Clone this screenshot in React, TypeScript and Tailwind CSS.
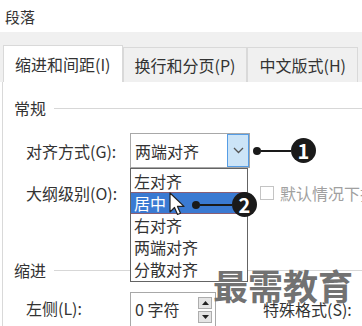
const font = { fontFamily: '"Noto Sans CJK SC", "Noto Sans", sans-serif' };

function Tab({ label, active }: { label: string; active?: boolean }) {
  return (
    <div
      className={`flex items-center whitespace-nowrap border-x border-t border-[#d9d9d9] px-[11px] text-[16px] text-[#333] ${
        active ? "h-[37px] bg-white" : "h-[35px] bg-[#f0f0f0]"
      }`}
    >
      {label}
    </div>
  );
}

function Section({ title }: { title: string }) {
  return (
    <div className="flex h-[20px] items-center gap-[8px] pl-[11px]">
      <span className="text-[16px] text-[#333]">{title}</span>
      <div className="h-px flex-1 bg-[#d7d7d7]" />
    </div>
  );
}

const options = ["左对齐", "居中", "右对齐", "两端对齐", "分散对齐"];

export default function App() {
  return (
    <div
      className="relative h-[326px] w-[362px] overflow-hidden bg-white leading-none"
      style={font}
    >
      {/* title */}
      <div className="flex h-[32px] items-center pl-[5px] text-[15px] text-[#333]">
        段落
      </div>

      {/* tab strip */}
      <div className="flex h-[50px] items-end bg-[#f0f0f0] pl-[3px]">
        <Tab label="缩进和间距(I)" active />
        <Tab label="换行和分页(P)" />
        <Tab label="中文版式(H)" />
      </div>

      {/* tab page */}
      <div className="ml-[2px] h-[244px] border-l border-[#d9d9d9] bg-white pt-[16px]">
        <Section title="常规" />

        <div className="mt-[15px] flex h-[35px] items-center">
          <span className="w-[127px] shrink-0 whitespace-nowrap pl-[23px] text-[16px] text-[#333]">
            对齐方式(G):
          </span>
          <div className="flex h-[35px] w-[120px] shrink-0 items-stretch border border-[#a8a8a8]">
            <span className="flex flex-1 items-center whitespace-nowrap pl-[4px] text-[16px] text-[#333]">
              两端对齐
            </span>
            <div className="flex w-[22px] items-center justify-center border border-[#569de5] bg-[#cce4f7]">
              <svg width="11" height="7" viewBox="0 0 11 7">
                <path d="M1 1l4.5 4.5L10 1" fill="none" stroke="#555" strokeWidth="1.3" />
              </svg>
            </div>
          </div>
        </div>

        <div className="mt-[15px] flex h-[20px] items-center">
          <span className="w-[257px] shrink-0 whitespace-nowrap pl-[23px] text-[16px] text-[#333]">
            大纲级别(O):
          </span>
          <div className="h-[14px] w-[14px] shrink-0 border border-[#c4c4c4]" />
          <span className="ml-[6px] shrink-0 whitespace-nowrap text-[16px] text-[#a0a0a0]">
            默认情况下折叠
          </span>
        </div>

        <div className="mt-[57px]">
          <Section title="缩进" />
        </div>

        <div className="mt-[12px] flex items-start">
          <span className="mt-[8px] w-[127px] shrink-0 whitespace-nowrap pl-[23px] text-[16px] text-[#333]">
            左侧(L):
          </span>
          <div className="flex h-[40px] w-[86px] shrink-0 border border-[#a8a8a8] pt-[4px]">
            <span className="mt-[4px] flex-1 whitespace-nowrap pl-[4px] text-[16px] text-[#333]">
              0 字符
            </span>
            <div className="mr-[3px] flex flex-col gap-[2px]">
              <div className="flex h-[12px] w-[14px] items-center justify-center border border-[#adadad] bg-[#e5e5e5]">
                <svg width="7" height="4" viewBox="0 0 7 4"><path d="M0 4L3.5 0L7 4z" fill="#222" /></svg>
              </div>
              <div className="flex h-[12px] w-[14px] items-center justify-center border border-[#adadad] bg-[#e5e5e5]">
                <svg width="7" height="4" viewBox="0 0 7 4"><path d="M0 0L3.5 4L7 0z" fill="#222" /></svg>
              </div>
            </div>
          </div>
          <span className="ml-[47px] mt-[9px] shrink-0 whitespace-nowrap text-[16px] text-[#333]">
            特殊格式(S):
          </span>
        </div>
      </div>

      {/* open dropdown list */}
      <div className="absolute left-[130px] top-[168px] flex h-[114px] w-[118px] flex-col border border-[#646464] bg-white pt-[1px]">
        {options.map((o) => (
          <div
            key={o}
            className={`flex h-[22px] items-center whitespace-nowrap pl-[3px] text-[16px] ${
              o === "居中"
                ? "border-y border-[#8a5f73] bg-[#3a7ad2] text-white"
                : "text-[#333]"
            }`}
          >
            {o}
          </div>
        ))}
      </div>

      {/* mouse cursor */}
      <svg className="absolute left-[169px] top-[192px]" width="16" height="25" viewBox="0 0 16 25">
        <path
          d="M1 1v19l4.5-4.5 3 7 3-1.3-3-6.8H15z"
          fill="#fff"
          stroke="#222"
          strokeWidth="1.2"
          strokeLinejoin="round"
        />
      </svg>

      {/* callout 1 */}
      <div className="absolute left-[253px] top-[138px] flex items-center">
        <div className="h-[8px] w-[8px] rounded-full bg-[#1a1a1a]" />
        <div className="h-[2px] w-[30px] bg-[#1a1a1a]" />
        <div className="flex h-[25px] w-[25px] items-center justify-center rounded-full bg-[#1a1a1a] text-[20px] font-bold text-white">
          1
        </div>
      </div>

      {/* callout 2 */}
      <div className="absolute left-[192px] top-[192px] flex items-center">
        <div className="h-[8px] w-[8px] rounded-full bg-[#1a1a1a]" />
        <div className="h-[2px] w-[32px] bg-[#1a1a1a]" />
        <div className="flex h-[25px] w-[25px] items-center justify-center rounded-full bg-[#1a1a1a] text-[20px] font-bold text-white">
          2
        </div>
      </div>

      {/* watermark */}
      <div className="absolute left-[213px] top-[267px] whitespace-nowrap text-[35px] font-bold leading-none text-[#727272]">
        最需教育
      </div>
    </div>
  );
}
